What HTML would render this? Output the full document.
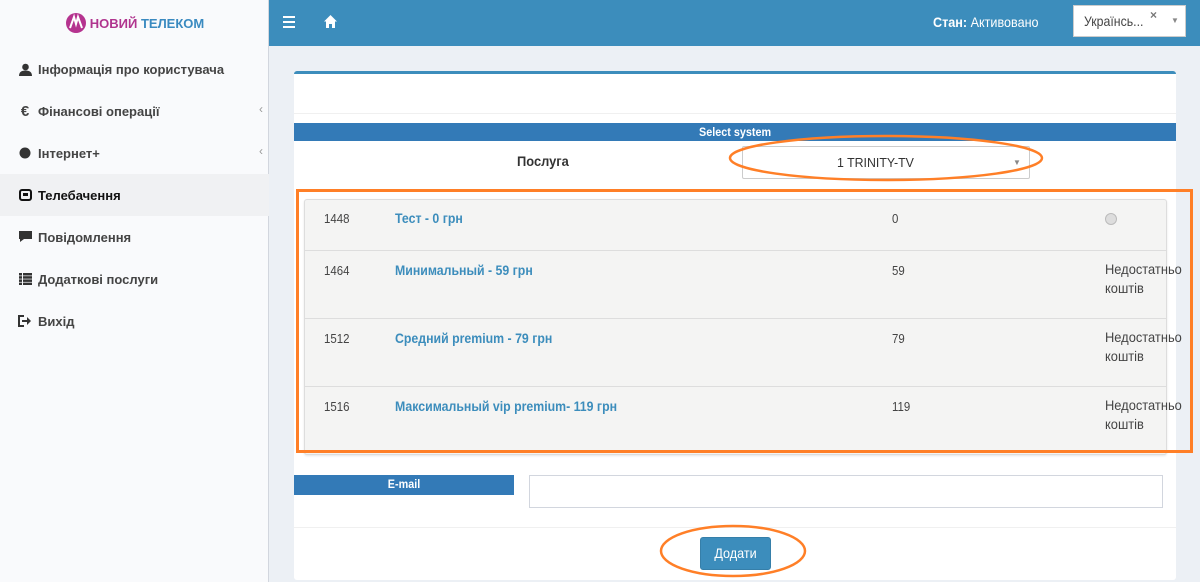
<!DOCTYPE html>
<html><head><meta charset="utf-8">
<style>
*{box-sizing:border-box;margin:0;padding:0}
body{width:1200px;height:582px;overflow:hidden;background:#ecf0f5;font-family:"Liberation Sans",sans-serif;position:relative;font-size:13px;color:#333}
.abs{position:absolute}
.side{left:0;top:0;width:269px;height:582px;background:#f9fafc;border-right:1px solid #d2d6de}
.logo{left:0;top:0;width:269px;height:46px;display:flex;align-items:center;justify-content:center;font-weight:bold;font-size:13px;color:#3a8ac0}
.item{left:0;width:269px;height:42px;display:flex;align-items:center;padding-left:18px;font-weight:bold;font-size:13px;color:#444}
.item .ic{width:14px;margin-right:6px;display:inline-flex;justify-content:center}
.chev{position:absolute;right:6px;top:12px;color:#999;font-size:12px;font-weight:normal}
.hdr{left:269px;top:0;width:931px;height:46px;background:#3c8dbc}
.box{left:294px;top:71px;width:882px;height:509px;background:#fff;border-top:3px solid #3c8dbc;border-radius:3px}
.cond{display:inline-block;transform:scaleX(.88);transform-origin:left center;white-space:nowrap}
.id{font-size:13px;color:#444}
.nm{font-size:14px;color:#3c8dbc;font-weight:bold}
.pr{font-size:13px;color:#444}
.ns{font-size:14px;color:#444;line-height:19px}
</style></head><body>
<div class="abs side"></div>
<div class="abs logo"><svg width="22" height="22" viewBox="0 0 22 22" style="margin-right:3px"><circle cx="11" cy="11" r="10" fill="#b5338f"/><path d="M5 16 L9 5 L11 12 L13 5 L17 16" stroke="#fff" stroke-width="2" fill="none"/></svg><span style="color:#b0348e">НОВИЙ</span>&nbsp;<span>ТЕЛЕКОМ</span></div>
<div class="abs item" style="top:48px"><span class="ic"><svg width="13" height="13" viewBox="0 0 13 13"><circle cx="6.5" cy="4" r="3.3" fill="#333"/><path d="M0 13 Q0 7.5 6.5 7.5 Q13 7.5 13 13Z" fill="#333"/></svg></span>Інформація про користувача</div>
<div class="abs item" style="top:90px"><span class="ic" style="font-size:15px">€</span>Фінансові операції<span class="chev">‹</span></div>
<div class="abs item" style="top:132px"><span class="ic"><svg width="12" height="12"><circle cx="6" cy="6" r="5.5" fill="#333"/></svg></span>Інтернет+<span class="chev">‹</span></div>
<div class="abs item" style="top:174px;background:#f0f1f3;color:#111"><span class="ic"><svg width="13" height="12"><rect x="1" y="1" width="11" height="10" rx="2" fill="none" stroke="#111" stroke-width="2"/><rect x="4" y="4" width="5" height="3" fill="#111"/></svg></span>Телебачення</div>
<div class="abs item" style="top:216px"><span class="ic"><svg width="13" height="12"><path d="M0 0H13V8H5L1 11V8H0Z" fill="#333"/></svg></span>Повідомлення</div>
<div class="abs item" style="top:258px"><span class="ic"><svg width="13" height="12" fill="#333"><rect x="0" y="0" width="3" height="2.5"/><rect x="4" y="0" width="9" height="2.5"/><rect x="0" y="3.2" width="3" height="2.5"/><rect x="4" y="3.2" width="9" height="2.5"/><rect x="0" y="6.4" width="3" height="2.5"/><rect x="4" y="6.4" width="9" height="2.5"/><rect x="0" y="9.6" width="3" height="2.4"/><rect x="4" y="9.6" width="9" height="2.4"/></svg></span>Додаткові послуги</div>
<div class="abs item" style="top:300px"><span class="ic"><svg width="14" height="12"><path d="M6 1H1V11H6" fill="none" stroke="#333" stroke-width="2"/><path d="M4 5H9V2L13 6L9 10V7H4Z" fill="#333"/></svg></span>Вихід</div>

<div class="abs hdr"></div>
<div class="abs" style="left:283px;top:16px;width:12px;height:12px"><div style="height:2px;background:#fff;margin-bottom:3px"></div><div style="height:2px;background:#fff;margin-bottom:3px"></div><div style="height:2px;background:#fff"></div></div>
<svg class="abs" style="left:323px;top:14px" width="15" height="15" viewBox="0 0 15 15"><path d="M7.5 1L1 7.5H3V14H6V10H9V14H12V7.5H14Z" fill="#fff"/></svg>
<div class="abs" style="left:933px;top:14px;color:#fff;font-size:14px"><span class="cond" style="transform:scaleX(.9)"><b>Стан:</b> Активовано</span></div>
<div class="abs" style="left:1073px;top:5px;width:113px;height:32px;background:#fff;border:1px solid #ccc"><span class="abs cond" style="left:10px;top:7px;font-size:14px;color:#444">Українсь...</span><span class="abs" style="left:76px;top:2px;font-size:12px;color:#777;font-weight:bold">×</span><span class="abs" style="left:97px;top:10px;font-size:8px;color:#888">▼</span></div>

<div class="abs box"></div>
<div class="abs" style="left:294px;top:113px;width:882px;height:1px;background:#f0f0f0"></div>
<div class="abs" style="left:294px;top:123px;width:882px;height:18px;background:#337ab7;color:#fff;font-weight:bold;font-size:12px;text-align:center;line-height:18px"><span style="display:inline-block;transform:scaleX(.9)">Select system</span></div>
<div class="abs" style="left:517px;top:153px;font-weight:bold;font-size:14px;color:#333"><span class="cond" style="transform:scaleX(.92)">Послуга</span></div>
<div class="abs" style="left:742px;top:146px;width:288px;height:33px;border:1px solid #ccc;background:#fff;border-radius:2px"><span class="abs cond" style="left:94px;top:8px;font-size:13px;transform:scaleX(.95)">1 TRINITY-TV</span><span class="abs" style="left:270px;top:11px;font-size:8px;color:#888">▼</span></div>

<div class="abs" style="left:304px;top:199px;width:863px;height:256px;background:#f4f4f3;border:1px solid #ddd;border-radius:3px;box-shadow:0 1px 2px rgba(0,0,0,.1)"></div>
<div class="abs" style="left:305px;top:250px;width:861px;height:1px;background:#ddd"></div>
<div class="abs" style="left:305px;top:318px;width:861px;height:1px;background:#ddd"></div>
<div class="abs" style="left:305px;top:386px;width:861px;height:1px;background:#ddd"></div>

<div class="abs id" style="left:324px;top:211px"><span class="cond">1448</span></div>
<div class="abs nm" style="left:395px;top:210px"><span class="cond">Тест - 0 грн</span></div>
<div class="abs pr" style="left:892px;top:211px"><span class="cond">0</span></div>
<div class="abs" style="left:1105px;top:213px;width:12px;height:12px;border-radius:50%;background:#ddd;border:1px solid #bbb"></div>

<div class="abs id" style="left:324px;top:263px"><span class="cond">1464</span></div>
<div class="abs nm" style="left:395px;top:262px"><span class="cond">Минимальный - 59 грн</span></div>
<div class="abs pr" style="left:892px;top:263px"><span class="cond">59</span></div>
<div class="abs ns" style="left:1105px;top:260px"><span class="cond" style="transform:scaleX(.92)">Недостатньо<br>коштів</span></div>

<div class="abs id" style="left:324px;top:331px"><span class="cond">1512</span></div>
<div class="abs nm" style="left:395px;top:330px"><span class="cond">Средний premium - 79 грн</span></div>
<div class="abs pr" style="left:892px;top:331px"><span class="cond">79</span></div>
<div class="abs ns" style="left:1105px;top:328px"><span class="cond" style="transform:scaleX(.92)">Недостатньо<br>коштів</span></div>

<div class="abs id" style="left:324px;top:399px"><span class="cond">1516</span></div>
<div class="abs nm" style="left:395px;top:398px"><span class="cond">Максимальный vip premium- 119 грн</span></div>
<div class="abs pr" style="left:892px;top:399px"><span class="cond">119</span></div>
<div class="abs ns" style="left:1105px;top:396px"><span class="cond" style="transform:scaleX(.92)">Недостатньо<br>коштів</span></div>

<div class="abs" style="left:294px;top:475px;width:220px;height:20px;background:#337ab7;color:#fff;font-weight:bold;font-size:12px;text-align:center;line-height:18px"><span style="display:inline-block;transform:scaleX(.9)">E-mail</span></div>
<div class="abs" style="left:529px;top:475px;width:634px;height:33px;border:1px solid #d2d6de;background:#fff"></div>
<div class="abs" style="left:294px;top:527px;width:882px;height:1px;background:#f0f0f0"></div>
<div class="abs" style="left:700px;top:537px;width:71px;height:33px;background:#3c8dbc;border:1px solid #367fa9;border-radius:3px;color:#fff;font-size:14px;text-align:center;line-height:31px"><span style="display:inline-block;transform:scaleX(.9)">Додати</span></div>

<svg class="abs" style="left:0;top:0" width="1200" height="582">
<rect x="297.5" y="190.5" width="894" height="261" fill="none" stroke="#ff7f27" stroke-width="3"/>
<ellipse cx="886" cy="158" rx="156" ry="22" fill="none" stroke="#ff7f27" stroke-width="2.5"/>
<ellipse cx="733" cy="551" rx="72" ry="25" fill="none" stroke="#ff7f27" stroke-width="2.5"/>
</svg>
</body></html>
